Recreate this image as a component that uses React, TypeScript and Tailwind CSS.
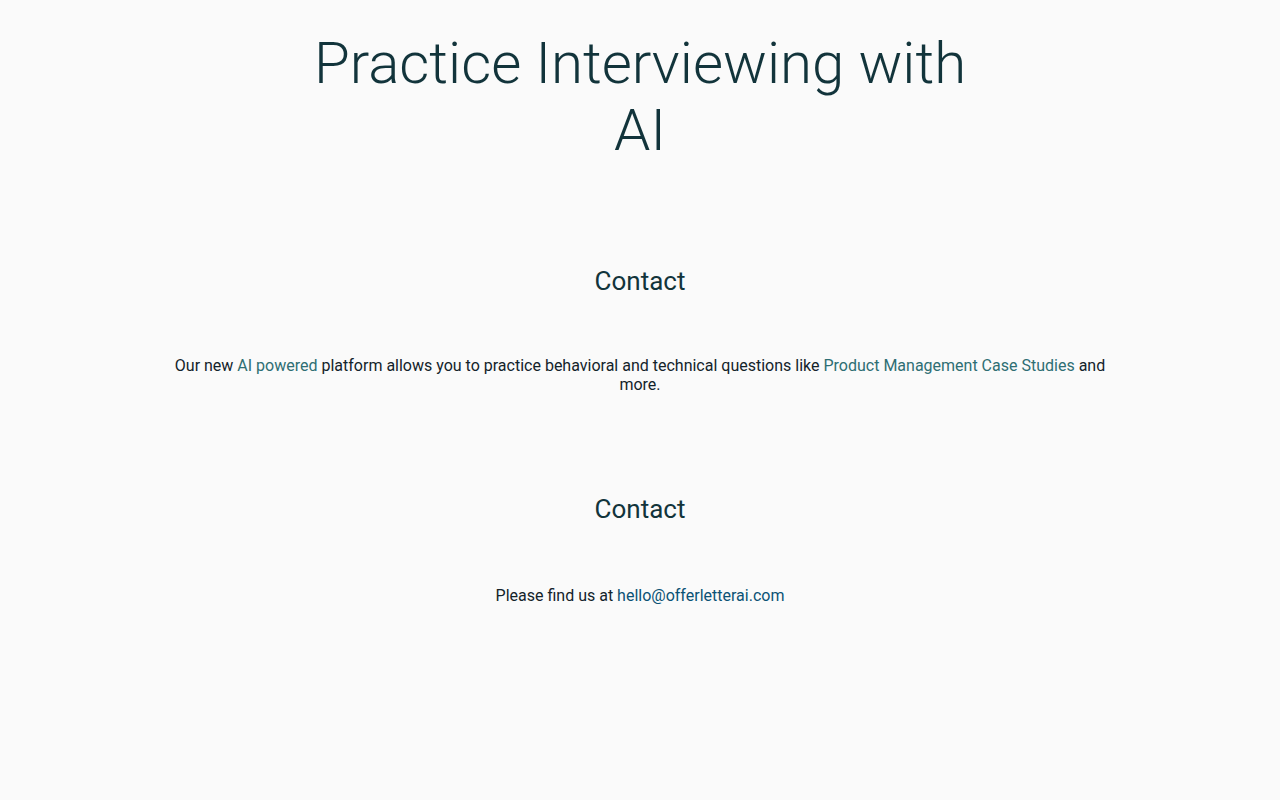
export default function App() {
  return (
    <div className="min-h-[800px] w-full bg-[#fafafa] text-center text-[#12343b]" style={{ fontFamily: "Roboto, 'Liberation Sans', sans-serif" }}>
      <div className="mx-auto w-[700px] pt-[30px]">
        <h1 className="text-[58.2px] font-light leading-[67px] m-0">Practice Interviewing with AI</h1>
      </div>
      <section className="mt-[103px]">
        <h2 className="text-[26px] font-normal leading-[1.1]">Contact</h2>
        <div className="mx-auto mt-[60px] w-[940px] text-[16px] leading-[19px] text-[#13232a]">
          Our new <a className="text-[#2e6e73]">AI powered</a> platform allows you to practice behavioral and technical questions like{" "}
          <a className="text-[#2e6e73]">Product Management Case Studies</a> and more.
        </div>
      </section>
      <section className="mt-[101px]">
        <h2 className="text-[26px] font-normal leading-[1.1]">Contact</h2>
        <div className="mx-auto mt-[63px] text-[16px] leading-[19px] text-[#13232a]">
          Please find us at <a className="text-[#0b5275]">hello@offerletterai.com</a>
        </div>
      </section>
    </div>
  );
}
